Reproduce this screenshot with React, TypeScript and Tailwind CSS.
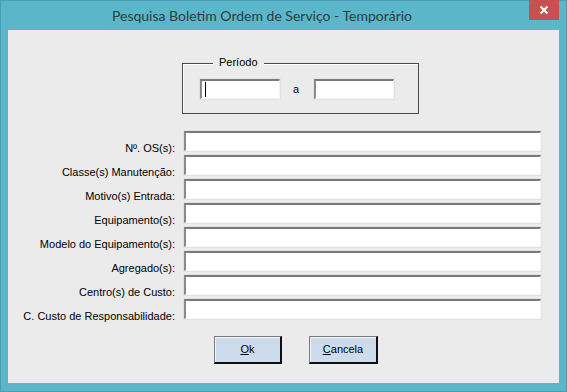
import React from 'react';

const fields = [
  'Nº. OS(s):',
  'Classe(s) Manutenção:',
  'Motivo(s) Entrada:',
  'Equipamento(s):',
  'Modelo do Equipamento(s):',
  'Agregado(s):',
  'Centro(s) de Custo:',
  'C. Custo de Responsabilidade:',
];

// Caixa de texto com borda "afundada" estilo Windows clássico
function SunkenInput({ width, height, caret }: { width: string; height: string; caret?: boolean }) {
  return (
    <div className={`${width} ${height} border border-[#e2e2e2] shrink-0`}>
      <div className="w-full h-full bg-white border-t-2 border-l-2 border-t-[#7a7a7a] border-l-[#8a8a8a] border-r border-b border-r-[#f4f4f4] border-b-[#f4f4f4] flex items-center">
        {caret && <span className="ml-[3px] w-px h-[15px] bg-black" />}
      </div>
    </div>
  );
}

function WinButton({ width, children }: { width: string; children: React.ReactNode }) {
  return (
    <button className={`${width} h-[28px] bg-[#cddcec] border-t border-l border-t-[#7c7c7c] border-l-[#7c7c7c] border-r-2 border-b-2 border-r-[#111] border-b-[#111] shadow-[inset_1px_1px_0_#f2f6fb] text-[11px] text-black flex items-center justify-center`}>
      {children}
    </button>
  );
}

export default function App() {
  return (
    <div className="w-[567px] h-[392px] bg-[#5cb6ca] border border-[#4a9eb2] flex flex-col font-['Liberation_Sans',Arial,sans-serif]">
      {/* Barra de título */}
      <div className="h-[29px] flex items-start shrink-0">
        <div className="flex-1 h-full flex items-center justify-center pr-[6px] font-['Lato',sans-serif] text-[14px] text-[#2f3b40]">
          Pesquisa Boletim Ordem de Serviço - Temporário
        </div>
        <div className="w-[30px] h-[20px] mt-[-1px] mr-[7px] bg-[#c75050] flex items-center justify-center">
          <svg width="10" height="10" viewBox="0 0 10 10">
            <path d="M1.5 1.5 L8.5 8.5 M8.5 1.5 L1.5 8.5" stroke="#fff" strokeWidth="2" />
          </svg>
        </div>
      </div>

      {/* Área cliente */}
      <div className="flex-1 mx-[7px] mb-[8px] bg-[#ebebeb] flex flex-col">
        {/* Período */}
        <div className="relative ml-[174px] mt-[33px] w-[237px] h-[51px] border border-[#4a4a4a] shadow-[inset_1px_1px_0_#ffffff] shrink-0">
          <span className="absolute left-[30px] top-[-8px] px-[6px] bg-[#ebebeb] text-[11px] leading-[13px] text-black">
            Período
          </span>
          <div className="flex items-center pt-[14px] pl-[16px]">
            <SunkenInput width="w-[82px]" height="h-[22px]" caret />
            <span className="ml-[12px] mr-[14px] text-[11px] text-black">a</span>
            <SunkenInput width="w-[82px]" height="h-[22px]" />
          </div>
        </div>

        {/* Campos */}
        <div className="mt-[16px] flex flex-col">
          {fields.map((f) => (
            <div key={f} className="h-[24px] flex items-start">
              <div className="w-[167px] pt-[12px] text-right text-[11px] leading-[13px] text-black whitespace-nowrap">
                {f}
              </div>
              <div className="ml-[8px]">
                <SunkenInput width="w-[359px]" height="h-[22px]" />
              </div>
            </div>
          ))}
        </div>

        {/* Botões */}
        <div className="mt-[14px] ml-[206px] flex gap-[27px]">
          <WinButton width="w-[68px]">
            <span><span className="underline">O</span>k</span>
          </WinButton>
          <WinButton width="w-[69px]">
            <span><span className="underline">C</span>ancela</span>
          </WinButton>
        </div>
      </div>
    </div>
  );
}
